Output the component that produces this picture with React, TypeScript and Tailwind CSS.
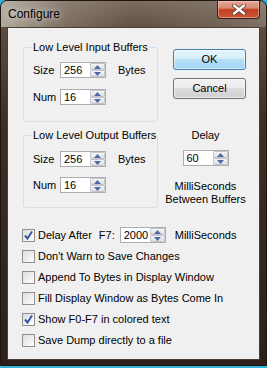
import React from "react";

function Arrow({ up }: { up?: boolean }) {
  return (
    <svg width="7" height="4" viewBox="0 0 7 4" className="block">
      {up ? (
        <path d="M0 4 L3.5 0 L7 4 Z" fill="#4c6ba3" />
      ) : (
        <path d="M0 0 L3.5 4 L7 0 Z" fill="#4c6ba3" />
      )}
    </svg>
  );
}

function Spin({ value }: { value: string }) {
  return (
    <div className="flex h-[16px] w-[46px] border border-[#abadb3] bg-white">
      <div className="flex-1 pl-[3px] text-[11px] leading-[14px] text-black">{value}</div>
      <div className="flex w-[15px] flex-col">
        <div className="flex h-[7px] items-center justify-center rounded-[1px] border border-[#c3c6cc] bg-[linear-gradient(to_bottom,#f6f6f6,#dedfe2)]">
          <Arrow up />
        </div>
        <div className="flex h-[7px] items-center justify-center rounded-[1px] border border-[#c3c6cc] bg-[linear-gradient(to_bottom,#f6f6f6,#dedfe2)]">
          <Arrow />
        </div>
      </div>
    </div>
  );
}

function Check({ checked, children }: { checked?: boolean; children: React.ReactNode }) {
  return (
    <div className="flex h-[16px] items-center">
      <div className="flex h-[13px] w-[13px] items-center justify-center border border-[#8f8f8f] bg-[linear-gradient(135deg,#dcdcdc,#ffffff)]">
        {checked && (
          <svg width="11" height="11" viewBox="0 0 11 11">
            <path d="M2 5.5 L4.5 8.5 L9 1.5" fill="none" stroke="#3a54a4" strokeWidth="2" />
          </svg>
        )}
      </div>
      <div className="ml-[3px] flex items-center whitespace-nowrap text-[11px] leading-[13px]">{children}</div>
    </div>
  );
}

function Group({
  title,
  className,
  children,
}: {
  title: string;
  className?: string;
  children: React.ReactNode;
}) {
  return (
    <div className={"relative rounded-[3px] border border-[#d5dfe5] " + (className ?? "")}>
      <div className="absolute -top-[7px] left-[8px] whitespace-nowrap bg-[#f0f0f0] px-[1px] text-[11px] leading-[13px]">
        {title}
      </div>
      {children}
    </div>
  );
}

function Row({ label, value, unit }: { label: string; value: string; unit?: string }) {
  return (
    <div className="flex h-[16px] items-center">
      <div className="w-[36px] pl-[9px] text-[11px] leading-[13px]">{label}</div>
      <Spin value={value} />
      {unit && <div className="ml-[12px] text-[11px] leading-[13px]">{unit}</div>}
    </div>
  );
}

export default function App() {
  return (
    <div className="h-[368px] w-[267px] bg-[#35b3d8] font-['Liberation_Sans',Arial,sans-serif] text-black">
      <div className="h-[366px] w-[267px] overflow-hidden rounded-t-[7px] border border-[#1d1510] bg-[linear-gradient(to_bottom,#7a6b5d_0px,#5d4c3d_30px,#3e2f24_120px,#2c2018_366px)]">
        <div className="flex h-[26px] justify-between bg-[linear-gradient(90deg,rgba(205,200,190,0.75)_0%,rgba(170,160,150,0.35)_25%,rgba(0,0,0,0)_50%,rgba(150,140,128,0.25)_80%,rgba(170,160,150,0.4)_100%)]">
          <div className="pl-[7px] pt-[6px] text-[12px] leading-[15px] [text-shadow:0_0_6px_rgba(255,255,255,0.9)]">
            Configure
          </div>
          <div className="mr-[6px] flex h-[18px] w-[43px] items-center justify-center rounded-b-[4px] border border-t-0 border-[#3a1d14] bg-[linear-gradient(to_bottom,#e6a896_0%,#d88a72_40%,#c2401f_52%,#c9573a_100%)] shadow-[inset_0_0_0_1px_rgba(255,220,210,0.45)]">
            <svg width="14" height="11" viewBox="0 0 14 11">
              <path d="M2 1.5 L12 9.5 M12 1.5 L2 9.5" stroke="#5a3a33" strokeWidth="4" strokeLinecap="round" />
              <path d="M2 1.5 L12 9.5 M12 1.5 L2 9.5" stroke="#ffffff" strokeWidth="2.4" strokeLinecap="round" />
            </svg>
          </div>
        </div>
        <div className="ml-[6px] h-[333px] w-[253px] border border-[#4b3e33] bg-[#f0f0f0]">
          <div className="flex pl-[15px] pt-[19px]">
            <div className="flex w-[135px] flex-col">
              <Group title="Low Level Input Buffers" className="h-[75px] pt-[14px]">
                <Row label="Size" value="256" unit="Bytes" />
                <div className="mt-[11px]">
                  <Row label="Num" value="16" />
                </div>
              </Group>
              <Group title="Low Level Output Buffers" className="mt-[13px] h-[73px] pt-[15px]">
                <Row label="Size" value="256" unit="Bytes" />
                <div className="mt-[10px]">
                  <Row label="Num" value="16" />
                </div>
              </Group>
            </div>
            <div className="ml-[7px] flex w-[81px] flex-col items-center">
              <div className="ml-[8px] mt-[2px] flex h-[21px] w-[73px] items-center justify-center self-start rounded-[3px] border border-[#3c7fb1] bg-[linear-gradient(to_bottom,#e5f4fc_0%,#d4eefb_50%,#b5e0f7_50%,#9fd5f3_100%)] text-[11px] shadow-[inset_0_0_0_1px_rgba(255,255,255,0.6)]">
                OK
              </div>
              <div className="ml-[8px] mt-[8px] flex h-[21px] w-[73px] items-center justify-center self-start rounded-[3px] border border-[#707070] bg-[linear-gradient(to_bottom,#f2f2f2_0%,#ebebeb_50%,#dddddd_50%,#cfcfcf_100%)] text-[11px] shadow-[inset_0_0_0_1px_rgba(255,255,255,0.6)]">
                Cancel
              </div>
              <div className="mt-[30px] text-[11px] leading-[13px]">Delay</div>
              <div className="mt-[8px]">
                <Spin value="60" />
              </div>
              <div className="mt-[14px] whitespace-nowrap text-center text-[11px] leading-[13px]">
                MilliSeconds
                <br />
                Between Buffers
              </div>
            </div>
          </div>
          <div className="mt-[19px] flex flex-col gap-[5px] pl-[14px]">
            <Check checked>
              <span>Delay After</span>
              <span className="ml-[7px]">F7:</span>
              <span className="ml-[5px]">
                <Spin value="2000" />
              </span>
              <span className="ml-[9px]">MilliSeconds</span>
            </Check>
            <Check>Don't Warn to Save Changes</Check>
            <Check>Append To Bytes in Display Window</Check>
            <Check>Fill Display Window as Bytes Come In</Check>
            <Check checked>Show F0-F7 in colored text</Check>
            <Check>Save Dump directly to a file</Check>
          </div>
        </div>
      </div>
    </div>
  );
}
